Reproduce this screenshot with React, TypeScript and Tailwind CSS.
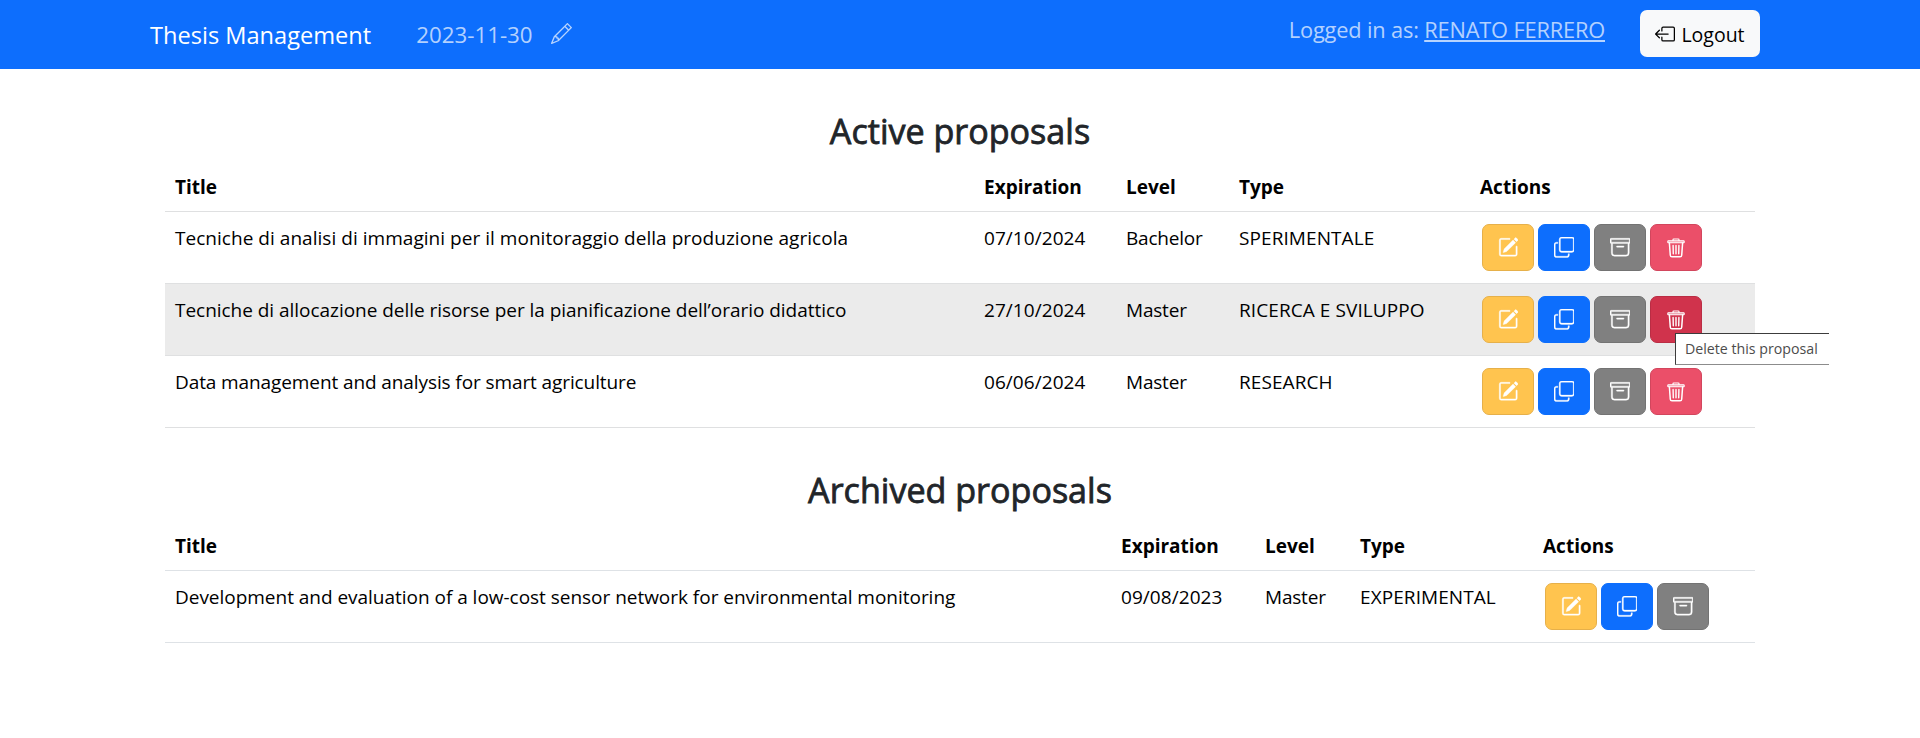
import type { ReactNode } from "react";
import { BsArchive, BsBoxArrowLeft, BsCopy, BsPencil, BsPencilSquare } from "react-icons/bs";

type Proposal = { title: string; tracking: string; expiration: string; level: string; type: string };

const active: Proposal[] = [
  { title: "Tecniche di analisi di immagini per il monitoraggio della produzione agricola", tracking: "tracking-[0.035px]", expiration: "07/10/2024", level: "Bachelor", type: "SPERIMENTALE" },
  { title: "Tecniche di allocazione delle risorse per la pianificazione dell’orario didattico", tracking: "tracking-[-0.035px]", expiration: "27/10/2024", level: "Master", type: "RICERCA E SVILUPPO" },
  { title: "Data management and analysis for smart agriculture", tracking: "tracking-[-0.1px]", expiration: "06/06/2024", level: "Master", type: "RESEARCH" },
];

const archived: Proposal[] = [
  { title: "Development and evaluation of a low-cost sensor network for environmental monitoring", tracking: "tracking-[-0.025px]", expiration: "09/08/2023", level: "Master", type: "EXPERIMENTAL" },
];

function TrashIcon() {
  return (
    <svg width="20" height="20" viewBox="0 0 20 20" fill="none" stroke="currentColor" strokeLinecap="round" strokeLinejoin="round">
      <path d="M7 2.4V1.7Q7 1 7.7 1h4.6Q13 1 13 1.7v.7" strokeWidth="1.2" />
      <rect x="1.8" y="2.8" width="16.4" height="2" rx="0.6" strokeWidth="1.1" fill="currentColor" fillOpacity="0.45" />
      <path d="M3.4 5l.9 12.2Q4.4 18.8 6 18.8h8q1.6 0 1.7-1.6L16.6 5" strokeWidth="1.5" />
      <path d="M7.1 7.5l.2 8.3M10 7.5v8.3M12.9 7.5l-.2 8.3" strokeWidth="1.4" />
    </svg>
  );
}

function ActionButton({ color, children }: { color: string; children: ReactNode }) {
  return (
    <button className={`relative flex h-[47px] w-[52px] items-center justify-center rounded-[7px] border text-[20.5px] text-white ${color}`}>
      {children}
    </button>
  );
}

function Actions({ removable, hovered }: { removable: boolean; hovered: boolean }) {
  return (
    <div className="flex gap-1 pt-0.5 pl-0.5">
      <ActionButton color="border-[#e6b04a] bg-[#ffc44f]"><BsPencilSquare strokeWidth={0.3} /></ActionButton>
      <ActionButton color="border-[#0d6efd] bg-[#0d6efd]"><BsCopy strokeWidth={0.25} /></ActionButton>
      <ActionButton color="border-[#737373] bg-[#808080]"><BsArchive strokeWidth={0.3} /></ActionButton>
      {removable && (
        <ActionButton color={hovered ? "border-[#ba2d44] bg-[#d0334c]" : "border-[#d2465d] bg-[#eb4f69]"}>
          <TrashIcon />
          {hovered && (
            <span className="absolute top-[36px] left-[24px] z-10 h-8 w-[154px] border-t border-b border-l border-t-[#3c3c3c] border-b-[#8c8c8c] border-l-[#3c3c3c] bg-white pl-[9px] text-left text-[14.2px] leading-[30px] whitespace-nowrap text-[#4c4c4c]">
              Delete this proposal
            </span>
          )}
        </ActionButton>
      )}
    </div>
  );
}

function ProposalTable({ rows, grid, removable, line, hoveredRow }: { rows: Proposal[]; grid: string; removable: boolean; line: string; hoveredRow?: number }) {
  return (
    <div className="mx-[165px] text-[19px] leading-[30px] text-black">
      <div className={`grid h-[50px] border-b pt-[10px] font-bold ${line} ${grid}`}>
        <div className="pl-[10px]">Title</div>
        <div className="pl-[10px]">Expiration</div>
        <div className="pl-[10px]">Level</div>
        <div className="pl-[10px]">Type</div>
        <div className="pl-[10px]">Actions</div>
      </div>
      {rows.map((row, i) => (
        <div key={row.title} className={`grid h-[72px] border-b pt-[10px] ${line} ${grid} ${i === hoveredRow ? "bg-[#ebebeb]" : ""}`}>
          <div className={`pt-px pl-[10px] ${row.tracking}`}>{row.title}</div>
          <div className="pt-px pl-[10px] tracking-[0.06px]">{row.expiration}</div>
          <div className="pt-px pl-[10px] tracking-[-0.2px]">{row.level}</div>
          <div className="pt-px pl-[10px] tracking-[0.08px]">{row.type}</div>
          <div className="pl-[10px]"><Actions removable={removable} hovered={i === hoveredRow} /></div>
        </div>
      ))}
    </div>
  );
}

function Heading({ children }: { children: ReactNode }) {
  return (
    <h2 className="h-[43px] pt-px text-center text-[34.1px] leading-[43px] font-medium text-[#212529] [-webkit-text-stroke:0.8px_#212529]">{children}</h2>
  );
}

export default function App() {
  return (
    <div className="h-[738px] w-[1920px] overflow-hidden bg-white font-['Open_Sans',sans-serif]">
      <nav className="flex h-[69px] items-start bg-[#0d6efd] pr-[160px] pl-[150px]">
        <div className="pt-[16px] text-[23.6px] leading-[38px] text-white">Thesis Management</div>
        <div className="flex items-center gap-[18px] pt-[18px] pl-[45px] text-white/70">
          <span className="text-[22.3px] leading-[34px]">2023-11-30</span>
          <BsPencil className="mb-[3px] text-[21px]" />
        </div>
        <div className="ml-auto flex">
          <div className="pt-[13px] text-[21.8px] leading-[34px] tracking-[-0.17px] whitespace-nowrap text-white/70">
            Logged in as: <span className="underline decoration-[1.5px] underline-offset-2 [text-decoration-skip-ink:none]">RENATO FERRERO</span>
          </div>
          <button className="mt-[10px] ml-[35px] flex h-[47px] w-[120px] items-center justify-center gap-[6px] rounded-[7px] bg-[#f8f9fa] text-[19.5px] text-black">
            <BsBoxArrowLeft className="text-[20px]" />
            <span className="pt-0.5">Logout</span>
          </button>
        </div>
      </nav>
      <main className="pt-[40px]">
        <Heading>Active proposals</Heading>
        <div className="pt-[10px]">
          <ProposalTable rows={active} grid="grid-cols-[809px_142px_113px_241px_285px]" removable line="border-[#dfe0e1]" hoveredRow={1} />
        </div>
        <div className="pt-[40px]">
          <Heading>Archived proposals</Heading>
        </div>
        <div className="pt-[10px]">
          <ProposalTable rows={archived} grid="grid-cols-[946px_144px_95px_183px_222px]" removable={false} line="border-[#dee2e6]" />
        </div>
      </main>
    </div>
  );
}
